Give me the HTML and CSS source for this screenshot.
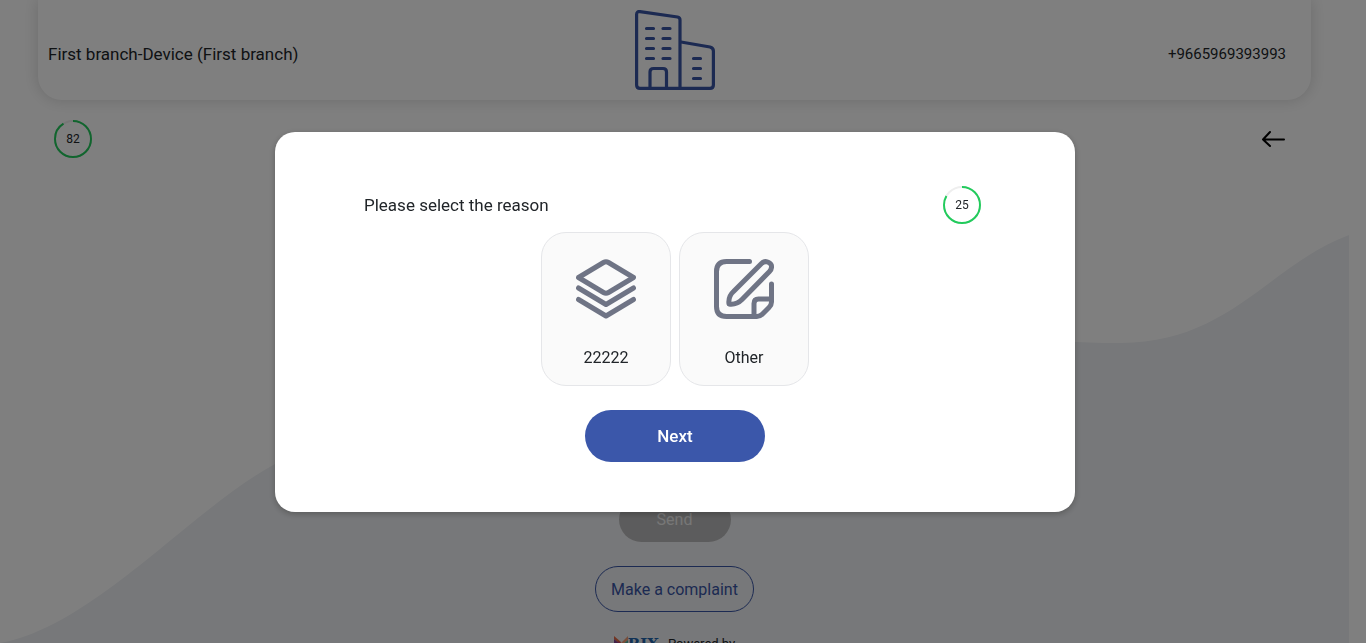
FILE: index.html
```html
<!DOCTYPE html>
<html lang="en">
<head>
<meta charset="utf-8">
<meta name="viewport" content="width=device-width, initial-scale=1">
<title>Branch feedback</title>
<link rel="stylesheet" href="styles.css">
</head>
<body>
<div class="page">
  <svg class="wave" viewBox="0 0 1349 643" preserveAspectRatio="none" aria-hidden="true">
    <path d="M0 643C94 626 190 510 275 464C480 350 700 250 900 308C970 330 1020 343 1120 343C1230 343 1270 264 1349 235V643Z"/>
  </svg>
  <header class="topbar">
    <span class="branch">First branch-Device (First branch)</span>
    <svg class="building" viewBox="0 0 80 80" aria-hidden="true">
      <path d="M5 1.6L42.5 7Q45 7.500 45 10V78.400H5Q1.600 78.400 1.600 75V4.500Q1.600 1.200 5 1.600Z"/>
      <path d="M46 32L75 37Q78.400 38 78.400 41V75Q78.400 78.400 75 78.400H45"/>
      <path d="M15 78V62Q15 58.500 18.500 58.500H28Q31.500 58.500 31.500 62V78"/>
      <path d="M11.500 18.500H18.500M28 18.500H35M11.500 28.500H18.500M28 28.500H35M11.500 38.500H18.500M28 38.500H35M11.500 48.500H18.500M28 48.500H35M58.500 48.500H65.500M58.500 58.500H65.500M58.500 68.500H65.500"/>
    </svg>
    <span class="phone">+9665969393993</span>
  </header>
  <div class="toolbar">
    <div class="timer">
      <svg viewBox="0 0 38 38" aria-hidden="true"><circle class="track" cx="19" cy="19" r="18"/><circle class="progress" cx="19" cy="19" r="18" pathLength="90" stroke-dasharray="82 90"/></svg>
      <span>82</span>
    </div>
    <button class="back" type="button" aria-label="Back">
      <svg viewBox="0 0 24 18" aria-hidden="true"><path d="M23 9.500H2M9 2L2 9.500L9 16"/></svg>
    </button>
  </div>
  <main class="actions">
    <button class="send" type="button" disabled>Send</button>
    <button class="complaint" type="button">Make a complaint</button>
    <footer class="powered">
      <span class="brand">
        <svg viewBox="0 0 14 16" aria-hidden="true"><path fill="#e46b45" d="M0 0L7 6L6 9L0 3Z"/><path fill="#82408f" d="M0 3L6 8L0 15Z"/><path fill="#ef9c74" d="M14 0L7 7L8 10L14 4Z"/><path fill="#4eae9b" d="M14 4L8 9L14 15Z"/><path fill="#c23c70" d="M4 5L7 7L10 16H6Z"/></svg>
        <b>RIX</b>
      </span>
      <span>Powered by</span>
    </footer>
  </main>
</div>
<div class="overlay">
  <section class="modal" role="dialog" aria-modal="true" aria-labelledby="reason-title">
    <div class="modal-head">
      <h1 id="reason-title">Please select the reason</h1>
      <div class="timer">
        <svg viewBox="0 0 38 38" aria-hidden="true"><circle class="track" cx="19" cy="19" r="18"/><circle class="progress" cx="19" cy="19" r="18" pathLength="30" stroke-dasharray="25 30"/></svg>
        <span>25</span>
      </div>
    </div>
    <div class="reasons">
      <button class="reason" type="button">
        <svg viewBox="0 0 60 60" aria-hidden="true"><path d="M27.500 3.500Q30 2 32.500 3.500L57.500 18.500L32.500 33.500Q30 35 27.500 33.500L2.500 18.500ZM2.500 29L30 45.500L57.500 29M2.500 40.500L30 57L57.500 40.500"/></svg>
        <span>22222</span>
      </button>
      <button class="reason" type="button">
        <svg viewBox="0 0 60 60" aria-hidden="true"><path d="M35.500 2.500H12.500Q2.500 2.500 2.500 12.500V47.500Q2.500 57.500 12.500 57.500H43Q46 57.500 48.500 55L55 48.500Q57.500 46 57.500 43V25M40 57V44.500Q40 40 44.500 40H57M47.500 4.500C51 1 56 3 57.300 6C58 9 57 11 55.500 12.500L28 40.500Q22.500 46 15 45Q14 37.500 19.500 32.500Z"/></svg>
        <span>Other</span>
      </button>
    </div>
    <button class="next" type="button">Next</button>
  </section>
</div>
</body>
</html>
```
FILE: styles.css
```css
* { box-sizing: border-box; }
body {
  margin: 0;
  height: 100vh;
  overflow: hidden;
  padding-right: 17px;
  background: #fff;
  color: #212529;
  font: 16px/24px Roboto, "Liberation Sans", sans-serif;
}
button { font: inherit; cursor: pointer; }
.page { position: relative; height: 100%; overflow: hidden; }
.wave { position: absolute; inset: 0; width: 100%; height: 100%; z-index: -1; }
.wave path { fill: #eff1f4; }
.topbar {
  display: grid;
  grid-template-columns: 1fr auto 1fr;
  align-items: center;
  margin: 0 38px;
  padding: 10px 25px 10px 10px;
  background: #fff;
  border-radius: 0 0 24px 24px;
  box-shadow: 0 0 16px rgba(0, 0, 0, .16);
}
.building {
  width: 80px;
  height: 80px;
  margin-left: 15px;
  fill: none;
  stroke: #3955a5;
  stroke-width: 3.2;
  stroke-linecap: round;
}
.branch, .phone { padding-top: 8px; }
.branch { font-size: 17px; }
.phone { font-size: 15px; text-align: right; }
.toolbar {
  display: flex;
  justify-content: space-between;
  align-items: center;
  padding: 20px 64px 0 54px;
}
.timer { display: grid; place-items: center; width: 38px; height: 38px; font-size: 12px; line-height: 18px; }
.timer > * { grid-area: 1 / 1; }
.timer svg { width: 38px; height: 38px; transform: rotate(-90deg); fill: none; stroke-width: 2; }
.track { stroke: #eee; }
.progress { stroke: #22cb5c; }
.back { display: flex; padding: 0; border: 0; background: none; }
.back svg { width: 24px; height: 18px; fill: none; stroke: #000; stroke-width: 2; stroke-linecap: round; stroke-linejoin: round; }
.actions { display: flex; flex-direction: column; align-items: center; padding-top: 339px; }
.send {
  width: 112px;
  height: 45px;
  border: 0;
  border-radius: 23px;
  background: #b9b9ba;
  color: #eee;
}
.complaint {
  height: 46px;
  margin-top: 24px;
  padding: 2px 15px 0;
  border: 1px solid #3955a5;
  border-radius: 23px;
  background: none;
  color: #3955a5;
}
.powered { display: flex; align-items: center; gap: 9px; margin-top: 20px; font-size: 13px; white-space: nowrap; }
.brand { display: flex; align-items: center; color: #2164ad; font: 15px/24px "DejaVu Serif", serif; }
.brand svg { width: 14px; height: 16px; }
.overlay {
  position: fixed;
  inset: 0;
  display: flex;
  align-items: center;
  justify-content: center;
  padding-right: 16px;
  background: rgba(0, 0, 0, .5);
}
.modal {
  display: flex;
  flex-direction: column;
  align-items: center;
  width: 800px;
  max-width: 100%;
  padding: 54px 89px 50px;
  border-radius: 20px;
  background: #fff;
  box-shadow: 0 2px 6px rgba(0, 0, 0, .25);
}
.modal-head { display: flex; align-items: center; justify-content: space-between; align-self: stretch; padding-right: 5px; }
h1 { margin: 0; font-size: 17px; line-height: 24px; font-weight: 400; }
.reasons { display: flex; gap: 8px; margin-top: 8px; }
.reason {
  display: flex;
  flex-direction: column;
  align-items: center;
  gap: 27px;
  width: 130px;
  padding: 26px 8px 15px;
  border: 1px solid #e5e6e9;
  border-radius: 25px;
  background: #fafafa;
  color: #212529;
}
.reason svg { width: 60px; height: 60px; fill: none; stroke: #6f7485; stroke-width: 5; stroke-linecap: round; stroke-linejoin: round; }
.next {
  width: 180px;
  height: 52px;
  margin-top: 24px;
  border: 0;
  border-radius: 26px;
  background: #3b57aa;
  color: #fff;
  font-size: 17px;
  font-weight: 500;
}
```
